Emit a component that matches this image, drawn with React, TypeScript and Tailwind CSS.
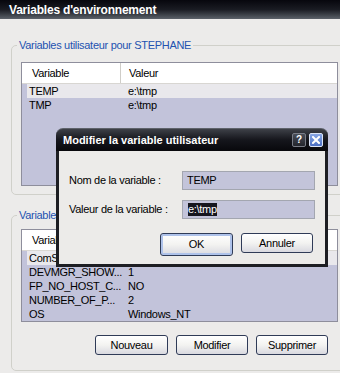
import React from "react";

const userVars = [
  { name: "TEMP", value: "e:\\tmp", selected: true },
  { name: "TMP", value: "e:\\tmp" },
];

const systemVars = [
  { name: "ComSpec", value: "C:\\WINDOWS\\system32\\cmd.exe", selected: true },
  { name: "DEVMGR_SHOW...", value: "1" },
  { name: "FP_NO_HOST_C...", value: "NO" },
  { name: "NUMBER_OF_P...", value: "2" },
  { name: "OS", value: "Windows_NT" },
];

type Row = { name: string; value: string; selected?: boolean };

const ListView = ({ rows, height }: { rows: Row[]; height: string }) => (
  <div className={`w-[317px] ${height} border border-[#8e8e9c] bg-[#c2c3da] overflow-hidden`}>
    <div className="flex h-[21px] bg-white border-b border-[#d8d6d2]">
      <div className="w-[99px] pl-[10px] flex items-center border-r border-[#cfcdc8]">Variable</div>
      <div className="pl-[8px] flex items-center">Valeur</div>
    </div>
    <div className="ml-[5px]">
      {rows.map((r) => (
        <div key={r.name} className={`flex h-[14px] items-center ${r.selected ? "bg-[#e9e8ec]" : ""}`}>
          <div className="w-[99px] pl-[2px] whitespace-nowrap overflow-hidden">{r.name}</div>
          <div className="pl-[2px] whitespace-nowrap">{r.value}</div>
        </div>
      ))}
    </div>
  </div>
);

const XpButton = ({ label, width, isDefault }: { label: string; width: string; isDefault?: boolean }) => (
  <button
    className={`${width} rounded-[3px] border border-[#2f3b57] bg-gradient-to-b from-white via-[#f3f3f1] to-[#d9d9e0] flex items-center justify-center ${
      isDefault ? "h-[23px] shadow-[inset_0_0_0_2px_#aec2ea]" : "h-[20px]"
    }`}
  >
    {label}
  </button>
);

const Group = ({ title, children, className }: { title: string; children: React.ReactNode; className?: string }) => (
  <fieldset className={`w-[340px] border border-[#d0d0ca] rounded-[5px] px-[9px] ${className ?? ""}`}>
    <legend className="-ml-[4px] px-[2px] leading-[13px] text-[#2352b0]">{title}</legend>
    {children}
  </fieldset>
);

const EditDialog = () => (
  <div className="absolute left-[56px] top-[128px] w-[272px] h-[139px] flex flex-col">
    <div className="h-[23px] rounded-t-[7px] bg-gradient-to-b from-[#3e4148] via-[#15161c] to-[#08080c] border-t border-[#5e626a] flex items-center pl-[7px] pr-[5px]">
      <span className="text-white font-bold text-[11px] tracking-normal flex-1">Modifier la variable utilisateur</span>
      <div className="flex gap-[3px]">
        <div className="w-[14px] h-[14px] rounded-[2px] border border-[#7a7e88] bg-gradient-to-b from-[#4a4e58] to-[#24262d] text-white font-bold text-[10px] leading-[12px] text-center">
          ?
        </div>
        <div className="w-[14px] h-[14px] rounded-[2px] border border-[#dbe4f6] bg-gradient-to-b from-[#88a6e4] to-[#4b6fc4] flex items-center justify-center">
          <svg width="8" height="8" viewBox="0 0 8 8">
            <path d="M1 1 L7 7 M7 1 L1 7" stroke="white" strokeWidth="2" strokeLinecap="square" />
          </svg>
        </div>
      </div>
    </div>
    <div className="flex-1 bg-[#ecebe9] border-x-[3px] border-b-[3px] border-[#1d1e23] pl-[10px] pr-[10px] pt-[20px]">
      <div className="flex items-center h-[19px]">
        <div className="w-[113px]">Nom de la variable :</div>
        <div className="w-[133px] h-[19px] border border-[#a3a6b0] bg-[#c3c4da] pl-[4px] flex items-center">TEMP</div>
      </div>
      <div className="flex items-center h-[19px] mt-[10px]">
        <div className="w-[113px]">Valeur de la variable :</div>
        <div className="w-[133px] h-[19px] border border-[#a3a6b0] bg-[#c3c4da] pl-[5px] flex items-center">
          <span className="bg-[#16161f] text-white leading-[13px]">e:\tmp</span>
        </div>
      </div>
      <div className="flex justify-end gap-[8px] mt-[14px] pr-[2px]">
        <XpButton label="OK" width="w-[73px]" isDefault />
        <XpButton label="Annuler" width="w-[72px]" />
      </div>
    </div>
  </div>
);

export default function App() {
  return (
    <div className="relative w-[340px] h-[373px] overflow-hidden bg-[#ecebea] text-[11px] tracking-[-0.3px] text-black font-['Liberation_Sans',Arial,sans-serif]">
      <div className="h-[19px] bg-gradient-to-b from-[#07070d] via-[#1a1c23] to-[#5c626a] flex items-center pl-[9px] text-white font-bold text-[12px] tracking-[-0.2px]">
        Variables d'environnement
      </div>
      <div className="pl-[11px]">
        <Group title="Variables utilisateur pour STEPHANE" className="mt-[20px] pb-[8px]">
          <div className="mt-[10px]">
            <ListView rows={userVars} height="h-[124px]" />
          </div>
        </Group>
        <Group title="Variables système" className="mt-[14px] pb-[15px]">
          <div className="mt-[7px]">
            <ListView rows={systemVars} height="h-[93px]" />
          </div>
          <div className="w-[317px] flex justify-end gap-[8px] pr-[10px] mt-[13px]">
            <XpButton label="Nouveau" width="w-[73px]" />
            <XpButton label="Modifier" width="w-[72px]" />
            <XpButton label="Supprimer" width="w-[72px]" />
          </div>
        </Group>
      </div>
      <EditDialog />
    </div>
  );
}
